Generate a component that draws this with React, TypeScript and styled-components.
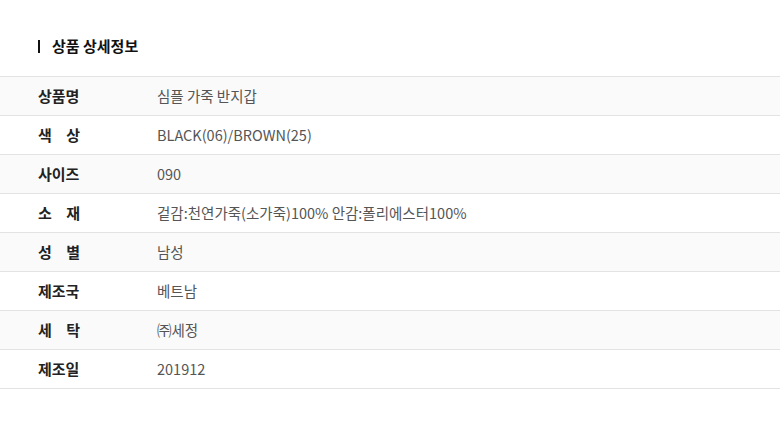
import React from 'react';
import styled, { createGlobalStyle } from 'styled-components';

const GlobalStyle = createGlobalStyle`
  body {
    margin: 0;
    background: #fff;
    font-family: 'Noto Sans CJK KR', 'Noto Sans', sans-serif;
  }
`;

const Section = styled.section`
  padding-top: 36px;
`;

const Title = styled.h2`
  display: flex;
  align-items: center;
  margin: 0 0 20px 38px;
  font-size: 15px;
  font-weight: 700;
  color: #111;
  line-height: 20px;

  &::before {
    content: '';
    width: 2px;
    height: 13px;
    background: #111;
    margin-right: 12px;
  }
`;

const Table = styled.div`
  border-top: 1px solid #e3e3e3;
`;

const Row = styled.div<{ $shaded: boolean }>`
  display: flex;
  align-items: center;
  box-sizing: border-box;
  height: 39px;
  padding-bottom: 2px;
  border-bottom: 1px solid #e3e3e3;
  background: ${(p) => (p.$shaded ? '#fafafa' : '#fff')};
`;

const Label = styled.div`
  width: 42px;
  margin: 0 77px 0 38px;
  font-size: 15px;
  font-weight: 700;
  color: #222;
  text-align: justify;
  text-align-last: justify;
  white-space: nowrap;
`;

const Value = styled.div`
  font-size: 14.5px;
  color: #555;
`;

const rows: [string, string][] = [
  ['상품명', '심플 가죽 반지갑'],
  ['색 상', 'BLACK(06)/BROWN(25)'],
  ['사이즈', '090'],
  ['소 재', '겉감:천연가죽(소가죽)100% 안감:폴리에스터100%'],
  ['성 별', '남성'],
  ['제조국', '베트남'],
  ['세 탁', '㈜세정'],
  ['제조일', '201912'],
];

export default function App() {
  return (
    <>
      <GlobalStyle />
      <Section>
        <Title>상품 상세정보</Title>
        <Table>
          {rows.map(([label, value], i) => (
            <Row key={label} $shaded={i % 2 === 0}>
              <Label>{label}</Label>
              <Value>{value}</Value>
            </Row>
          ))}
        </Table>
      </Section>
    </>
  );
}
